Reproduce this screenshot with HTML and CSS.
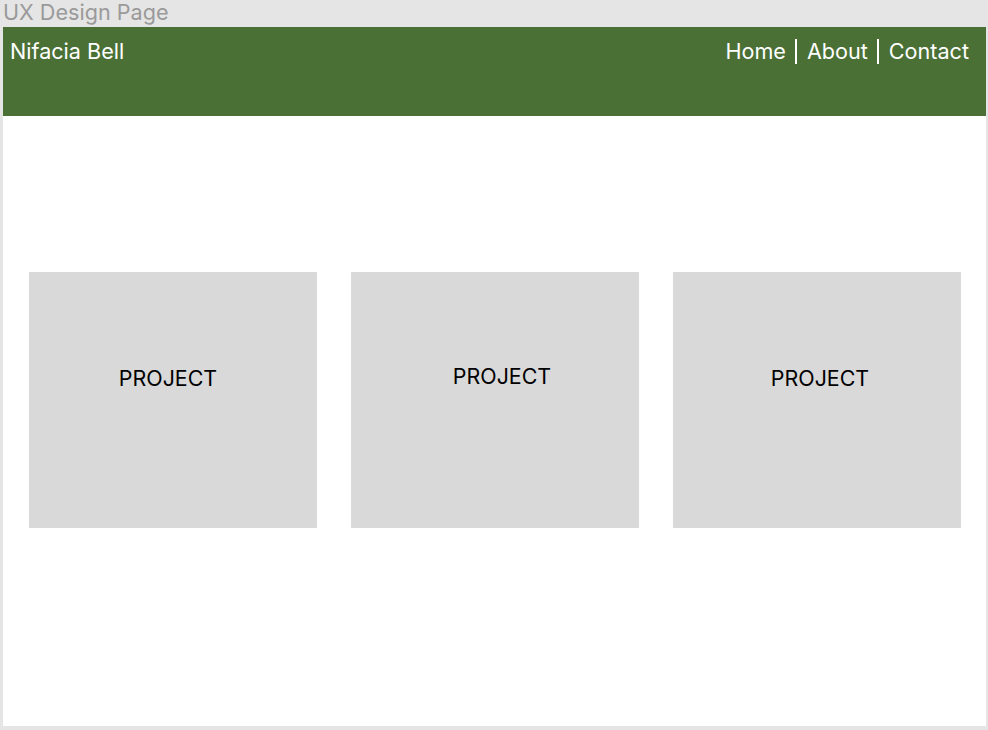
FILE: index.html
```html
<!DOCTYPE html>
<html lang="en">
<head>
<meta charset="utf-8">
<title>UX Design Page</title>
<link rel="stylesheet" href="styles.css">
</head>
<body>
<div class="label">UX Design Page</div>
<div class="frame">
  <header class="header">
    <div class="brand">Nifacia Bell</div>
    <nav class="nav">
      <span class="link">Home</span>
      <span class="sep"></span>
      <span class="link">About</span>
      <span class="sep"></span>
      <span class="link">Contact</span>
    </nav>
  </header>
  <main class="projects">
    <div class="card card-a"><span>PROJECT</span></div>
    <div class="card card-b"><span>PROJECT</span></div>
    <div class="card card-c"><span>PROJECT</span></div>
  </main>
</div>
</body>
</html>
```

FILE: styles.css
```css
* { box-sizing: border-box; }
html, body { margin: 0; padding: 0; }
body {
  background: #e5e5e5;
  font-family: Inter, "Noto Sans", sans-serif;
  width: 988px;
  height: 730px;
  overflow: hidden;
}
.label {
  height: 27px;
  padding-left: 3px;
  font-size: 21.6px;
  line-height: 24px;
  color: #9a9a9a;
}
.frame {
  margin-left: 3px;
  width: 983px;
  height: 699px;
  background: #ffffff;
}
.header {
  height: 89px;
  background: #4a7035;
  display: flex;
  justify-content: space-between;
  align-items: flex-start;
  padding: 10px 17px 0 7px;
  color: #ffffff;
  font-size: 21.6px;
  line-height: 28px;
}
.nav {
  display: flex;
  align-items: center;
  gap: 9.5px;
}
.sep {
  width: 2px;
  height: 25px;
  background: #ffffff;
}
.projects {
  display: flex;
  gap: 34px;
  padding: 156px 0 0 26px;
}
.card {
  width: 288px;
  height: 256px;
  background: #d9d9d9;
  display: flex;
  justify-content: center;
  padding-top: 94px;
  font-size: 21.4px;
  line-height: 24px;
  color: #000000;
}
.card-a { padding-right: 10px; }
.card-b { padding-top: 92px; padding-left: 14px; }
.card-c { padding-left: 6px; }
```
